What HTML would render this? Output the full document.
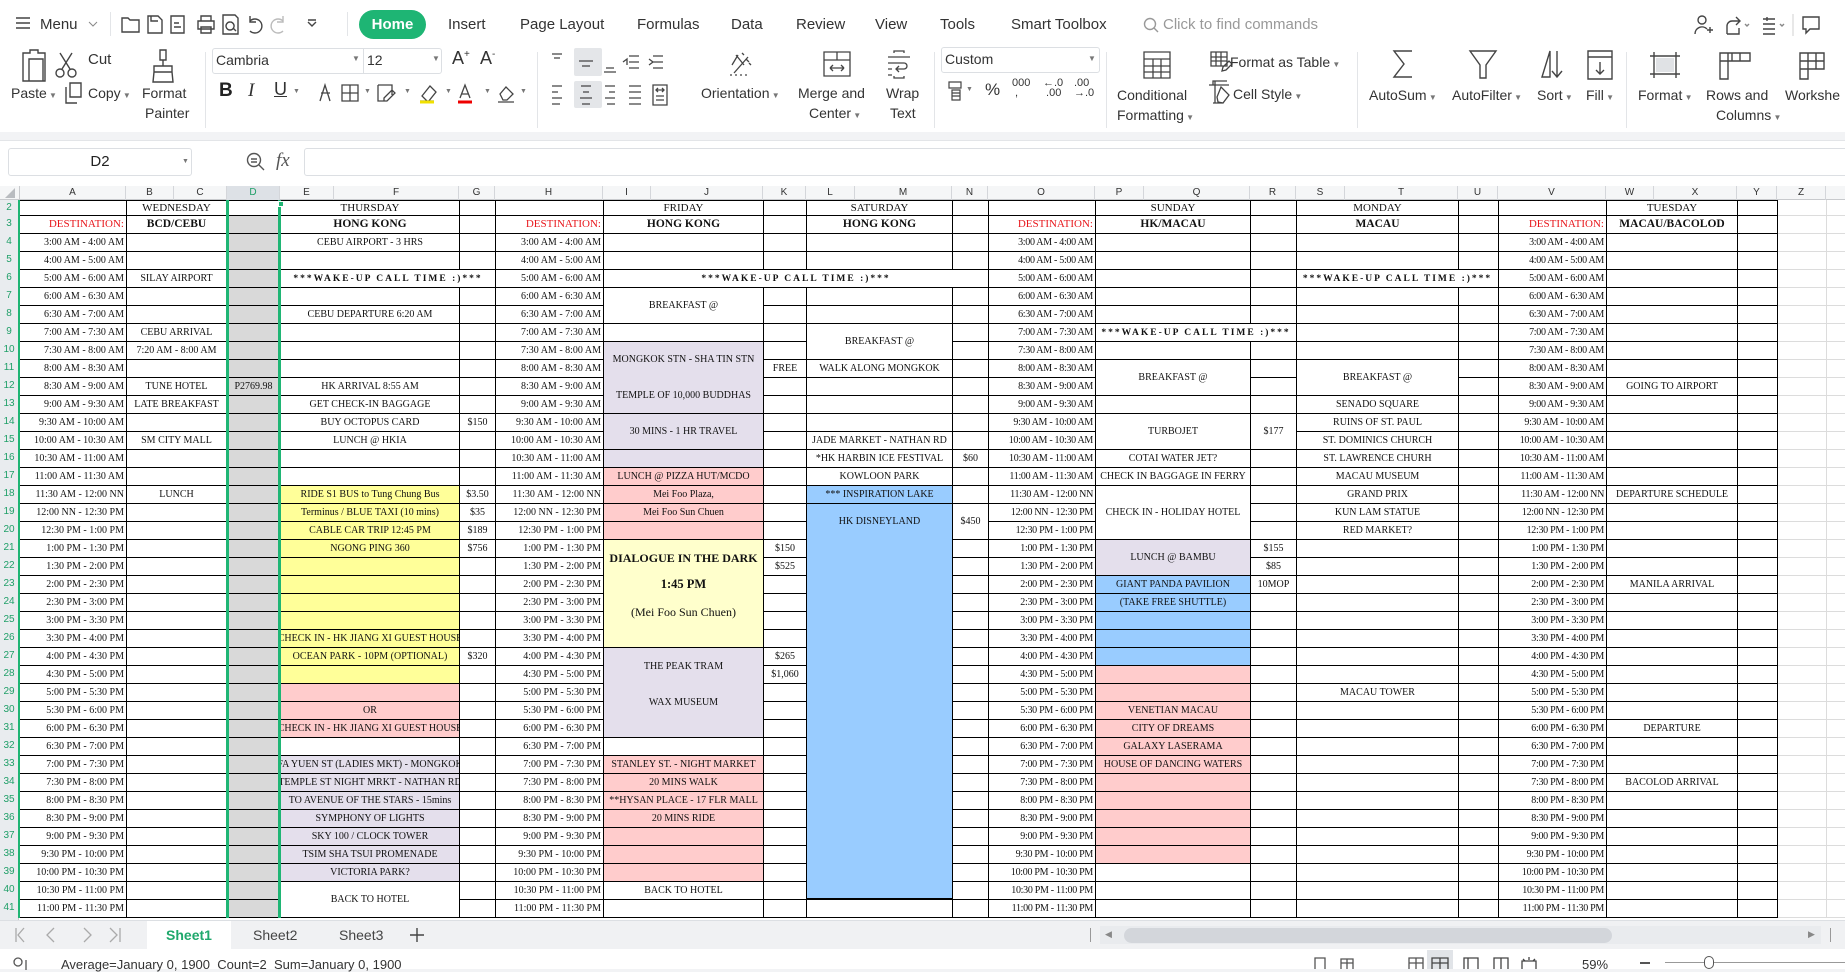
<!DOCTYPE html>
<html><head><meta charset="utf-8">
<style>
*{margin:0;padding:0;box-sizing:border-box}
body{width:1845px;height:969px;overflow:hidden;background:#f2f3f5;font-family:"Liberation Sans",sans-serif;color:#333;position:relative}
.a{position:absolute}
.tabs{left:0;top:0;width:1845px;height:46px;background:#fff}
.tab{position:absolute;top:16px;font-size:15px;color:#333}
.rib{left:0;top:46px;width:1845px;height:86px;background:#fff}
.lbl{position:absolute;font-size:14px;color:#333;white-space:nowrap}
.sep{position:absolute;width:1px;background:#e3e5e8}
.c{position:absolute;display:flex;align-items:center;justify-content:center;text-align:center;white-space:nowrap;overflow:hidden;font:10px "Liberation Serif",serif;color:#111}
.b{border:1px solid #000}
.w{background:#fff}.lav{background:#e4dfec}.pk{background:#ffcccc}.yl{background:#ffff99}.yl2{background:#ffffcc}.bl{background:#99ccff}
.wk{letter-spacing:2px;font-weight:bold;font-size:9.5px}
.tc{position:absolute;top:233px;font:10px "Liberation Serif",serif;color:#111}
.tc div{height:18px;line-height:19px;text-align:right;padding-right:2px;white-space:nowrap}
.hd{font-size:11px}
.hb{font-size:11.5px;font-weight:bold}
.red{color:#e8171c;justify-content:flex-end;padding-right:2px;font-size:11px}
.ch{position:absolute;top:186px;height:14px;font-size:10px;color:#333;text-align:center;line-height:14px;border-right:1px solid #d4d6da}
.rn div{height:18px;line-height:18px;text-align:center;font-size:10px;color:#1f9f68}
svg{position:absolute;overflow:visible}
</style></head><body>

<!-- top tab bar -->
<div class="a tabs">
  <svg style="left:15px;top:16px" width="16" height="14"><path d="M1 2h14M1 7h14M1 12h14" stroke="#444" stroke-width="1.5"/></svg>
  <div class="tab" style="left:40px">Menu</div>
  <svg style="left:88px;top:21px" width="10" height="6"><path d="M1 1l4 4 4-4" stroke="#888" fill="none"/></svg>
  <div class="sep" style="left:110px;top:12px;height:24px"></div>
  <svg style="left:121px;top:13px" width="220" height="22" fill="none" stroke="#444" stroke-width="1.4">
    <path d="M1 5h6l2 2h9v12H1z"/>
    <path d="M27 3h10l4 4v13H27zM30 3v5h7"/>
    <path d="M50 3h13v17H50zM53 10h5M53 14h7"/>
    <path d="M77 8h16v8H77zM80 8V3h10v5M80 14h10v6H80z"/>
    <path d="M102 2h12l3 3v16h-15zM109 9a4 4 0 1 0 .1 0M112 15l3 3"/>
    <path d="M129 8a7 7 0 1 1 0 10M129 3v6h6"/>
    <path d="M162 8a7 7 0 1 0 0 10M162 3v6h-6" stroke="#bbb"/>
    <path d="M187 9l4 4 4-4M187 7h8"/>
  </svg>
  <div class="sep" style="left:347px;top:12px;height:24px"></div>
  <div class="a" style="left:359px;top:10px;width:67px;height:29px;border-radius:15px;background:#1eb574;color:#fff;font-weight:bold;font-size:15px;text-align:center;line-height:29px">Home</div>
  <div class="tab" style="left:448px">Insert</div>
  <div class="tab" style="left:520px">Page Layout</div>
  <div class="tab" style="left:637px">Formulas</div>
  <div class="tab" style="left:731px">Data</div>
  <div class="tab" style="left:796px">Review</div>
  <div class="tab" style="left:875px">View</div>
  <div class="tab" style="left:940px">Tools</div>
  <div class="tab" style="left:1011px">Smart Toolbox</div>
  <svg style="left:1143px;top:17px" width="16" height="16" fill="none" stroke="#999" stroke-width="1.4"><circle cx="7" cy="7" r="5.5"/><path d="M11 11l4 4"/></svg>
  <div class="tab" style="left:1163px;color:#999">Click to find commands</div>
  <svg style="left:1693px;top:14px" width="150" height="22" fill="none" stroke="#444" stroke-width="1.4">
    <circle cx="9" cy="6" r="4"/><path d="M2 20a7 7 0 0 1 12-5M14 16h6M17 13v6"/>
    <path d="M34 20V12a5 5 0 0 1 5-5h8M43 3l4 4-4 4M34 20h12v-6"/><path d="M52 10l2 2 2-2" stroke="#888"/>
    <path d="M70 5h12M70 10h12M70 15h12M70 20h12M74 3v4" /><path d="M87 10l2 2 2-2" stroke="#888"/>
    <path d="M100 0v22" stroke="#ddd"/>
    <path d="M110 3h16v12h-9l-4 4v-4h-3z"/>
  </svg>
</div>

<!-- ribbon -->
<div class="a rib">
  <svg style="left:20px;top:3px" width="200" height="34" fill="none" stroke="#444" stroke-width="1.4">
    <path d="M3 4h7V1h8v3h7v28H3z M9 10h14v22H9z"/>
    <circle cx="40" cy="24" r="4"/><circle cx="52" cy="24" r="4"/><path d="M42 20L52 4M50 20L40 4"/>
    <path d="M140 1h6v10h-6zM143 11v6M134 17h18v6h-18zM134 23l-1 10h20l-1-10"/>
  </svg>
  <div class="lbl" style="left:88px;top:5px;font-size:15px">Cut</div>
  <div class="lbl" style="left:11px;top:39px">Paste<span style="font-size:8px;color:#777"> ▼</span></div>
  <svg style="left:64px;top:36px" width="20" height="22" fill="none" stroke="#444" stroke-width="1.4"><path d="M6 1h11v14H6zM2 5v16h11"/></svg>
  <div class="lbl" style="left:88px;top:39px">Copy<span style="font-size:8px;color:#777"> ▼</span></div>
  <div class="lbl" style="left:142px;top:39px">Format</div>
  <div class="lbl" style="left:145px;top:59px">Painter</div>
  <div class="sep" style="left:205px;top:6px;height:76px"></div>
  <div class="a" style="left:212px;top:2px;width:230px;height:26px;border:1px solid #dcdfe3;border-radius:3px;background:#fff"></div>
  <div class="lbl" style="left:216px;top:6px">Cambria</div>
  <div class="lbl" style="left:352px;top:8px;font-size:8px;color:#777">▼</div>
  <div class="a" style="left:363px;top:3px;width:1px;height:24px;background:#dcdfe3"></div>
  <div class="lbl" style="left:367px;top:6px">12</div>
  <div class="lbl" style="left:432px;top:8px;font-size:8px;color:#777">▼</div>
  <div class="lbl" style="left:452px;top:2px;font-size:18px">A<sup style="font-size:10px">+</sup></div>
  <div class="lbl" style="left:480px;top:2px;font-size:18px">A<sup style="font-size:10px">-</sup></div>
  <div class="lbl" style="left:219px;top:34px;font-size:19px;font-weight:bold;color:#222">B</div>
  <div class="lbl" style="left:248px;top:34px;font-size:19px;font-style:italic;font-family:'Liberation Serif'">I</div>
  <div class="lbl" style="left:274px;top:33px;font-size:18px;text-decoration:underline">U</div>
  <svg style="left:300px;top:36px" width="220" height="22" fill="none" stroke="#444" stroke-width="1.3">
    <path d="M20 19L25 3l5 16M21 11h9"/>
    <path d="M42 3h16v16H42zM50 3v16M42 11h16"/>
    <path d="M78 3h14v10M78 3v16h8M84 16l8-8 3 3-8 8h-3z"/>
    <path d="M122 14l8-10 6 6-8 10zM120 19h14" /><path d="M120 20h14" stroke="#f0e000" stroke-width="3"/>
    <path d="M160 16l5-13 5 13M162 12h6"/><path d="M158 20h14" stroke="#e00" stroke-width="3"/>
    <path d="M200 12l6-7 7 7-6 6h-4zM198 20h16"/>
  </svg>
  <div class="lbl" style="left:293px;top:42px;font-size:7px;color:#777">▼</div>
  <div class="lbl" style="left:364px;top:42px;font-size:7px;color:#777">▼</div>
  <div class="lbl" style="left:404px;top:42px;font-size:7px;color:#777">▼</div>
  <div class="lbl" style="left:445px;top:42px;font-size:7px;color:#777">▼</div>
  <div class="lbl" style="left:484px;top:42px;font-size:7px;color:#777">▼</div>
  <div class="lbl" style="left:520px;top:42px;font-size:7px;color:#777">▼</div>
  <div class="sep" style="left:537px;top:6px;height:76px"></div>
  <div class="a" style="left:574px;top:35px;width:28px;height:27px;background:#e4e6e9;border-radius:2px"></div>
  <div class="a" style="left:574px;top:2px;width:28px;height:28px;background:#e4e6e9;border-radius:2px"></div>
  <svg style="left:549px;top:6px" width="140" height="56" fill="none" stroke="#444" stroke-width="1.3">
    <path d="M3 2h10M5 6h6 M30 9h14M33 14h8 M57 16h8M55 20h12 M80 4h10M80 10h10M80 16h10M74 10l4-3v6 M104 4h10M104 10h10M104 16h10M100 7l4 3-4 3"/>
    <path d="M3 34h10M3 40h6M3 46h10M3 52h8 M32 34h10M34 40h6M31 46h12M33 52h8 M56 34h10M60 40h6M56 46h10M58 52h8 M80 34h12M80 40h12M80 46h12M80 52h12 M104 33v20h14V33zM107 38h8M109 36l-2 2 2 2M113 36l2 2-2 2M107 44h8M107 48h8"/>
  </svg>
  <svg style="left:728px;top:3px" width="200" height="34" fill="none" stroke="#444" stroke-width="1.3">
    <path d="M8 6l8 10M4 16l6-10 M14 4l2 2M18 10l3 3M21 14l2 2M6 24l14-16M2 26h2M7 26h2M12 26h2M17 26h2"/>
    <path d="M96 3h26v24H96zM96 11h26M109 3v8M102 19h14M102 19l3-3M102 19l3 3M116 19l-3-3M116 19l-3 3"/>
    <path d="M166 4v-2h10v2M166 27v2h10v-2M160 8h22M160 14h16a3 3 0 0 1 0 6h-8M171 17l-3 3 3 3M160 20h4M160 26h4"/>
  </svg>
  <div class="lbl" style="left:701px;top:39px">Orientation<span style="font-size:8px;color:#777"> ▼</span></div>
  <div class="lbl" style="left:798px;top:39px">Merge and</div>
  <div class="lbl" style="left:809px;top:59px">Center<span style="font-size:8px;color:#777"> ▼</span></div>
  <div class="lbl" style="left:886px;top:39px">Wrap</div>
  <div class="lbl" style="left:890px;top:59px">Text</div>
  <div class="sep" style="left:934px;top:6px;height:76px"></div>
  <div class="a" style="left:941px;top:1px;width:159px;height:26px;border:1px solid #dcdfe3;border-radius:3px;background:#fff"></div>
  <div class="lbl" style="left:945px;top:5px">Custom</div>
  <div class="lbl" style="left:1088px;top:8px;font-size:8px;color:#777">▼</div>
  <svg style="left:947px;top:34px" width="150" height="24" fill="none" stroke="#444" stroke-width="1.2">
    <path d="M2 2h12v6H2zM5 10h8v10H5zM5 13h8M5 16h8"/>
  </svg>
  <div class="lbl" style="left:966px;top:40px;font-size:7px;color:#777">▼</div>
  <div class="lbl" style="left:985px;top:34px;font-size:17px">%</div>
  <div class="lbl" style="left:1012px;top:32px;font-size:11px;line-height:10px">000<br>&nbsp;,</div>
  <div class="lbl" style="left:1043px;top:32px;font-size:11px;line-height:10px">←.0<br>&nbsp;.00</div>
  <div class="lbl" style="left:1074px;top:32px;font-size:11px;line-height:10px">.00<br>→.0</div>
  <div class="sep" style="left:1106px;top:6px;height:76px"></div>
  <svg style="left:1143px;top:5px" width="220" height="56" fill="none" stroke="#444" stroke-width="1.3">
    <path d="M1 1h26v26H1zM1 8h26M1 15h26M1 21h26M10 8v19M18 8v19"/>
    <path d="M68 1h16v14H68zM68 6h16M68 10h16M73 1v14M78 1v14M80 16l6-6 3 3-6 6-4 1z"/>
    <path d="M70 34v-4h14M72 30v22M70 52h10M66 34h20M78 36l8 8-6 8-5-1-1-5z"/>
  </svg>
  <div class="lbl" style="left:1230px;top:8px">Format as Table<span style="font-size:8px;color:#777"> ▼</span></div>
  <div class="lbl" style="left:1233px;top:40px">Cell Style<span style="font-size:8px;color:#777"> ▼</span></div>
  <div class="lbl" style="left:1117px;top:41px">Conditional</div>
  <div class="lbl" style="left:1117px;top:61px">Formatting<span style="font-size:8px;color:#777"> ▼</span></div>
  <div class="sep" style="left:1357px;top:6px;height:76px"></div>
  <svg style="left:1392px;top:4px" width="230" height="32" fill="none" stroke="#444" stroke-width="1.4">
    <path d="M20 1H2l10 13L2 27h18"/>
    <path d="M78 1h26l-10 14v13h-6V15z"/>
    <path d="M150 27l8-26v26zM150 27h8M165 1v26M160 21l5 6 5-6"/>
    <path d="M196 1h24v28h-24zM196 7h24M208 12v12M204 20l4 4 4-4"/>
  </svg>
  <div class="lbl" style="left:1369px;top:41px">AutoSum<span style="font-size:8px;color:#777"> ▼</span></div>
  <div class="lbl" style="left:1452px;top:41px">AutoFilter<span style="font-size:8px;color:#777"> ▼</span></div>
  <div class="lbl" style="left:1537px;top:41px">Sort<span style="font-size:8px;color:#777"> ▼</span></div>
  <div class="lbl" style="left:1586px;top:41px">Fill<span style="font-size:8px;color:#777"> ▼</span></div>
  <div class="sep" style="left:1626px;top:6px;height:76px"></div>
  <svg style="left:1650px;top:6px" width="200" height="30" fill="none" stroke="#444" stroke-width="1.4">
    <path d="M4 0v26M26 0v26M0 4h30M0 22h30"/><path d="M6 6h18v14H6z" fill="#e0e2e5" stroke="none"/>
    <path d="M70 1h30v8H70zM70 1v26h8V1M82 1v8M90 1v8"/>
    <path d="M150 1h24v16h-24zM150 9h24M158 1v26h-8V17M166 1v16"/>
  </svg>
  <div class="lbl" style="left:1638px;top:41px">Format<span style="font-size:8px;color:#777"> ▼</span></div>
  <div class="lbl" style="left:1706px;top:41px">Rows and</div>
  <div class="lbl" style="left:1716px;top:61px">Columns<span style="font-size:8px;color:#777"> ▼</span></div>
  <div class="lbl" style="left:1785px;top:41px">Workshe</div>
</div>

<!-- formula bar -->
<div class="a" style="left:0;top:140px;width:1845px;height:46px;background:#fff;border-top:1px solid #e3e5e8"></div>
<div class="a" style="left:8px;top:148px;width:184px;height:28px;border:1px solid #dcdfe3;border-radius:3px;background:#fff;font-size:15px;text-align:center;line-height:26px;color:#222">D2</div>
<div class="a" style="left:182px;top:158px;font-size:7px;color:#777">▼</div>
<svg style="left:246px;top:152px" width="20" height="20" fill="none" stroke="#555" stroke-width="1.4"><circle cx="8" cy="8" r="6.5"/><path d="M5 7h6M5 10h6M13 13l5 5"/></svg>
<div class="a" style="left:276px;top:150px;font:italic 19px 'Liberation Serif',serif;color:#555">fx</div>
<div class="a" style="left:304px;top:148px;width:1545px;height:28px;border:1px solid #dcdfe3;border-radius:3px;background:#fff"></div>

<!-- column header -->
<div class="a" style="left:0;top:186px;width:1845px;height:14px;background:#f5f6f7;border-bottom:1px solid #c8cacd"></div>
<div class="a" style="left:227px;top:186px;width:53px;height:14px;background:#dde1e6"></div>
<svg style="left:4px;top:188px" width="12" height="11"><path d="M11 0v10H1z" fill="#b9bcc0"/></svg>
<div class="ch" style="left:0;width:20px;border-right:1px solid #c8cacd"></div>
<div class="ch" style="left:20px;width:106px">A</div>
<div class="ch" style="left:126px;width:48px">B</div>
<div class="ch" style="left:174px;width:53px">C</div>
<div class="ch" style="left:227px;width:53px;color:#1f9f68">D</div>
<div class="ch" style="left:280px;width:54px">E</div>
<div class="ch" style="left:334px;width:125px">F</div>
<div class="ch" style="left:459px;width:36px">G</div>
<div class="ch" style="left:495px;width:108px">H</div>
<div class="ch" style="left:603px;width:48px">I</div>
<div class="ch" style="left:651px;width:112px">J</div>
<div class="ch" style="left:763px;width:43px">K</div>
<div class="ch" style="left:806px;width:49px">L</div>
<div class="ch" style="left:855px;width:97px">M</div>
<div class="ch" style="left:952px;width:36px">N</div>
<div class="ch" style="left:988px;width:107px">O</div>
<div class="ch" style="left:1095px;width:49px">P</div>
<div class="ch" style="left:1144px;width:106px">Q</div>
<div class="ch" style="left:1250px;width:46px">R</div>
<div class="ch" style="left:1296px;width:49px">S</div>
<div class="ch" style="left:1345px;width:113px">T</div>
<div class="ch" style="left:1458px;width:40px">U</div>
<div class="ch" style="left:1498px;width:108px">V</div>
<div class="ch" style="left:1606px;width:48px">W</div>
<div class="ch" style="left:1654px;width:83px">X</div>
<div class="ch" style="left:1737px;width:40px">Y</div>
<div class="ch" style="left:1777px;width:49px">Z</div>
<div class="ch" style="left:1826px;width:19px;border:none"></div>

<!-- sheet area -->
<div class="a" style="left:0;top:200px;width:1845px;height:720px;background:#fff"></div>
<div class="a rn" style="left:0;top:200px;width:19px;height:720px;background:#e9ecef;border-right:1px solid #c8cacd">
<div style="height:15px;line-height:15px">2</div><div>3</div><div>4</div><div>5</div><div>6</div><div>7</div><div>8</div><div>9</div><div>10</div><div>11</div><div>12</div><div>13</div><div>14</div><div>15</div><div>16</div><div>17</div><div>18</div><div>19</div><div>20</div><div>21</div><div>22</div><div>23</div><div>24</div><div>25</div><div>26</div><div>27</div><div>28</div><div>29</div><div>30</div><div>31</div><div>32</div><div>33</div><div>34</div><div>35</div><div>36</div><div>37</div><div>38</div><div>39</div><div>40</div><div>41</div>
</div>
<div class="a" style="left:18px;top:200px;width:2px;height:718px;background:#1fb574"></div>

<div class="a" style="left:1778px;top:233px;width:67px;height:686px;background:repeating-linear-gradient(#dcdcdc 0 1px,transparent 1px 18px)"></div>
<div class="a" style="left:1778px;top:215px;width:67px;height:1px;background:#dcdcdc"></div>
<div class="a" style="left:1826px;top:200px;width:1px;height:718px;background:#dcdcdc"></div>

<div class="a" style="left:227px;top:215px;width:53px;height:703px;background:#d9d9d9"></div>

<div class="a" style="left:20px;top:233px;width:1758px;height:685px;background:repeating-linear-gradient(#000 0 1px,transparent 1px 18px)"></div>
<div class="a" style="left:20px;top:200px;width:1758px;height:1px;background:#000"></div>
<div class="a" style="left:20px;top:215px;width:1758px;height:1px;background:#000"></div>
<div class="a" style="left:20px;top:917px;width:1758px;height:1px;background:#000"></div>
<div class="a" style="left:126px;top:200px;width:1px;height:718px;background:#000"></div>
<div class="a" style="left:226px;top:200px;width:1px;height:718px;background:#000"></div>
<div class="a" style="left:280px;top:200px;width:1px;height:718px;background:#000"></div>
<div class="a" style="left:459px;top:200px;width:1px;height:718px;background:#000"></div>
<div class="a" style="left:495px;top:200px;width:1px;height:718px;background:#000"></div>
<div class="a" style="left:603px;top:200px;width:1px;height:718px;background:#000"></div>
<div class="a" style="left:763px;top:200px;width:1px;height:718px;background:#000"></div>
<div class="a" style="left:806px;top:200px;width:1px;height:718px;background:#000"></div>
<div class="a" style="left:952px;top:200px;width:1px;height:718px;background:#000"></div>
<div class="a" style="left:988px;top:200px;width:1px;height:718px;background:#000"></div>
<div class="a" style="left:1095px;top:200px;width:1px;height:718px;background:#000"></div>
<div class="a" style="left:1250px;top:200px;width:1px;height:718px;background:#000"></div>
<div class="a" style="left:1296px;top:200px;width:1px;height:718px;background:#000"></div>
<div class="a" style="left:1458px;top:200px;width:1px;height:718px;background:#000"></div>
<div class="a" style="left:1498px;top:200px;width:1px;height:718px;background:#000"></div>
<div class="a" style="left:1606px;top:200px;width:1px;height:718px;background:#000"></div>
<div class="a" style="left:1737px;top:200px;width:1px;height:718px;background:#000"></div>
<div class="a" style="left:1777px;top:200px;width:1px;height:718px;background:#000"></div>

<div class="c hd" style="left:126px;top:200px;width:101px;height:16px">WEDNESDAY</div>
<div class="c hd" style="left:280px;top:200px;width:180px;height:16px">THURSDAY</div>
<div class="c hd" style="left:603px;top:200px;width:161px;height:16px">FRIDAY</div>
<div class="c hd" style="left:806px;top:200px;width:147px;height:16px">SATURDAY</div>
<div class="c hd" style="left:1095px;top:200px;width:156px;height:16px">SUNDAY</div>
<div class="c hd" style="left:1296px;top:200px;width:163px;height:16px">MONDAY</div>
<div class="c hd" style="left:1606px;top:200px;width:132px;height:16px">TUESDAY</div>
<div class="c hb" style="left:126px;top:215px;width:101px;height:18px">BCD/CEBU</div>
<div class="c hb" style="left:280px;top:215px;width:180px;height:18px">HONG KONG</div>
<div class="c hb" style="left:603px;top:215px;width:161px;height:18px">HONG KONG</div>
<div class="c hb" style="left:806px;top:215px;width:147px;height:18px">HONG KONG</div>
<div class="c hb" style="left:1095px;top:215px;width:156px;height:18px">HK/MACAU</div>
<div class="c hb" style="left:1296px;top:215px;width:163px;height:18px">MACAU</div>
<div class="c hb" style="left:1606px;top:215px;width:132px;height:18px">MACAU/BACOLOD</div>
<div class="c red" style="left:20px;top:215px;width:106px;height:18px">DESTINATION:</div>
<div class="c red" style="left:495px;top:215px;width:108px;height:18px">DESTINATION:</div>
<div class="c red" style="left:988px;top:215px;width:107px;height:18px">DESTINATION:</div>
<div class="c red" style="left:1498px;top:215px;width:108px;height:18px">DESTINATION:</div>

<div class="tc" style="left:21px;width:105px"><div>3:00 AM - 4:00 AM</div><div>4:00 AM - 5:00 AM</div><div>5:00 AM - 6:00 AM</div><div>6:00 AM - 6:30 AM</div><div>6:30 AM - 7:00 AM</div><div>7:00 AM - 7:30 AM</div><div>7:30 AM - 8:00 AM</div><div>8:00 AM - 8:30 AM</div><div>8:30 AM - 9:00 AM</div><div>9:00 AM - 9:30 AM</div><div>9:30 AM - 10:00 AM</div><div>10:00 AM - 10:30 AM</div><div>10:30 AM - 11:00 AM</div><div>11:00 AM - 11:30 AM</div><div>11:30 AM - 12:00 NN</div><div>12:00 NN - 12:30 PM</div><div>12:30 PM - 1:00 PM</div><div>1:00 PM - 1:30 PM</div><div>1:30 PM - 2:00 PM</div><div>2:00 PM - 2:30 PM</div><div>2:30 PM - 3:00 PM</div><div>3:00 PM - 3:30 PM</div><div>3:30 PM - 4:00 PM</div><div>4:00 PM - 4:30 PM</div><div>4:30 PM - 5:00 PM</div><div>5:00 PM - 5:30 PM</div><div>5:30 PM - 6:00 PM</div><div>6:00 PM - 6:30 PM</div><div>6:30 PM - 7:00 PM</div><div>7:00 PM - 7:30 PM</div><div>7:30 PM - 8:00 PM</div><div>8:00 PM - 8:30 PM</div><div>8:30 PM - 9:00 PM</div><div>9:00 PM - 9:30 PM</div><div>9:30 PM - 10:00 PM</div><div>10:00 PM - 10:30 PM</div><div>10:30 PM - 11:00 PM</div><div>11:00 PM - 11:30 PM</div></div>
<div class="tc" style="left:496px;width:107px"><div>3:00 AM - 4:00 AM</div><div>4:00 AM - 5:00 AM</div><div>5:00 AM - 6:00 AM</div><div>6:00 AM - 6:30 AM</div><div>6:30 AM - 7:00 AM</div><div>7:00 AM - 7:30 AM</div><div>7:30 AM - 8:00 AM</div><div>8:00 AM - 8:30 AM</div><div>8:30 AM - 9:00 AM</div><div>9:00 AM - 9:30 AM</div><div>9:30 AM - 10:00 AM</div><div>10:00 AM - 10:30 AM</div><div>10:30 AM - 11:00 AM</div><div>11:00 AM - 11:30 AM</div><div>11:30 AM - 12:00 NN</div><div>12:00 NN - 12:30 PM</div><div>12:30 PM - 1:00 PM</div><div>1:00 PM - 1:30 PM</div><div>1:30 PM - 2:00 PM</div><div>2:00 PM - 2:30 PM</div><div>2:30 PM - 3:00 PM</div><div>3:00 PM - 3:30 PM</div><div>3:30 PM - 4:00 PM</div><div>4:00 PM - 4:30 PM</div><div>4:30 PM - 5:00 PM</div><div>5:00 PM - 5:30 PM</div><div>5:30 PM - 6:00 PM</div><div>6:00 PM - 6:30 PM</div><div>6:30 PM - 7:00 PM</div><div>7:00 PM - 7:30 PM</div><div>7:30 PM - 8:00 PM</div><div>8:00 PM - 8:30 PM</div><div>8:30 PM - 9:00 PM</div><div>9:00 PM - 9:30 PM</div><div>9:30 PM - 10:00 PM</div><div>10:00 PM - 10:30 PM</div><div>10:30 PM - 11:00 PM</div><div>11:00 PM - 11:30 PM</div></div>
<div class="tc" style="left:989px;width:106px;letter-spacing:-0.3px"><div>3:00 AM - 4:00 AM</div><div>4:00 AM - 5:00 AM</div><div>5:00 AM - 6:00 AM</div><div>6:00 AM - 6:30 AM</div><div>6:30 AM - 7:00 AM</div><div>7:00 AM - 7:30 AM</div><div>7:30 AM - 8:00 AM</div><div>8:00 AM - 8:30 AM</div><div>8:30 AM - 9:00 AM</div><div>9:00 AM - 9:30 AM</div><div>9:30 AM - 10:00 AM</div><div>10:00 AM - 10:30 AM</div><div>10:30 AM - 11:00 AM</div><div>11:00 AM - 11:30 AM</div><div>11:30 AM - 12:00 NN</div><div>12:00 NN - 12:30 PM</div><div>12:30 PM - 1:00 PM</div><div>1:00 PM - 1:30 PM</div><div>1:30 PM - 2:00 PM</div><div>2:00 PM - 2:30 PM</div><div>2:30 PM - 3:00 PM</div><div>3:00 PM - 3:30 PM</div><div>3:30 PM - 4:00 PM</div><div>4:00 PM - 4:30 PM</div><div>4:30 PM - 5:00 PM</div><div>5:00 PM - 5:30 PM</div><div>5:30 PM - 6:00 PM</div><div>6:00 PM - 6:30 PM</div><div>6:30 PM - 7:00 PM</div><div>7:00 PM - 7:30 PM</div><div>7:30 PM - 8:00 PM</div><div>8:00 PM - 8:30 PM</div><div>8:30 PM - 9:00 PM</div><div>9:00 PM - 9:30 PM</div><div>9:30 PM - 10:00 PM</div><div>10:00 PM - 10:30 PM</div><div>10:30 PM - 11:00 PM</div><div>11:00 PM - 11:30 PM</div></div>
<div class="tc" style="left:1499px;width:107px;letter-spacing:-0.3px"><div>3:00 AM - 4:00 AM</div><div>4:00 AM - 5:00 AM</div><div>5:00 AM - 6:00 AM</div><div>6:00 AM - 6:30 AM</div><div>6:30 AM - 7:00 AM</div><div>7:00 AM - 7:30 AM</div><div>7:30 AM - 8:00 AM</div><div>8:00 AM - 8:30 AM</div><div>8:30 AM - 9:00 AM</div><div>9:00 AM - 9:30 AM</div><div>9:30 AM - 10:00 AM</div><div>10:00 AM - 10:30 AM</div><div>10:30 AM - 11:00 AM</div><div>11:00 AM - 11:30 AM</div><div>11:30 AM - 12:00 NN</div><div>12:00 NN - 12:30 PM</div><div>12:30 PM - 1:00 PM</div><div>1:00 PM - 1:30 PM</div><div>1:30 PM - 2:00 PM</div><div>2:00 PM - 2:30 PM</div><div>2:30 PM - 3:00 PM</div><div>3:00 PM - 3:30 PM</div><div>3:30 PM - 4:00 PM</div><div>4:00 PM - 4:30 PM</div><div>4:30 PM - 5:00 PM</div><div>5:00 PM - 5:30 PM</div><div>5:30 PM - 6:00 PM</div><div>6:00 PM - 6:30 PM</div><div>6:30 PM - 7:00 PM</div><div>7:00 PM - 7:30 PM</div><div>7:30 PM - 8:00 PM</div><div>8:00 PM - 8:30 PM</div><div>8:30 PM - 9:00 PM</div><div>9:00 PM - 9:30 PM</div><div>9:30 PM - 10:00 PM</div><div>10:00 PM - 10:30 PM</div><div>10:30 PM - 11:00 PM</div><div>11:00 PM - 11:30 PM</div></div>

<div class="c" style="left:126px;top:269px;width:101px;height:19px">SILAY AIRPORT</div>
<div class="c" style="left:126px;top:323px;width:101px;height:19px">CEBU ARRIVAL</div>
<div class="c" style="left:126px;top:341px;width:101px;height:19px">7:20 AM - 8:00 AM</div>
<div class="c" style="left:126px;top:377px;width:101px;height:19px">TUNE HOTEL</div>
<div class="c" style="left:126px;top:395px;width:101px;height:19px">LATE BREAKFAST</div>
<div class="c" style="left:126px;top:431px;width:101px;height:19px">SM CITY MALL</div>
<div class="c" style="left:126px;top:485px;width:101px;height:19px">LUNCH</div>
<div class="c" style="left:227px;top:377px;width:53px;height:19px">P2769.98</div>

<div class="c" style="left:280px;top:233px;width:180px;height:19px">CEBU AIRPORT - 3 HRS</div>
<div class="c b w wk" style="left:280px;top:269px;width:216px;height:19px">***WAKE-UP CALL TIME :)***</div>
<div class="c" style="left:280px;top:305px;width:180px;height:19px">CEBU DEPARTURE 6:20 AM</div>
<div class="c" style="left:280px;top:377px;width:180px;height:19px">HK ARRIVAL 8:55 AM</div>
<div class="c" style="left:280px;top:395px;width:180px;height:19px">GET CHECK-IN BAGGAGE</div>
<div class="c" style="left:280px;top:413px;width:180px;height:19px">BUY OCTOPUS CARD</div>
<div class="c" style="left:280px;top:431px;width:180px;height:19px">LUNCH @ HKIA</div>
<div class="c b yl" style="left:280px;top:485px;width:180px;height:19px">RIDE S1 BUS to Tung Chung Bus</div>
<div class="c b yl" style="left:280px;top:503px;width:180px;height:19px">Terminus / BLUE TAXI (10 mins)</div>
<div class="c b yl" style="left:280px;top:521px;width:180px;height:19px">CABLE CAR TRIP 12:45 PM</div>
<div class="c b yl" style="left:280px;top:539px;width:180px;height:19px">NGONG PING 360</div>
<div class="c b yl" style="left:280px;top:557px;width:180px;height:19px"></div>
<div class="c b yl" style="left:280px;top:575px;width:180px;height:19px"></div>
<div class="c b yl" style="left:280px;top:593px;width:180px;height:19px"></div>
<div class="c b yl" style="left:280px;top:611px;width:180px;height:19px"></div>
<div class="c b yl" style="left:280px;top:629px;width:180px;height:19px">CHECK IN - HK JIANG XI GUEST HOUSE</div>
<div class="c b yl" style="left:280px;top:647px;width:180px;height:19px">OCEAN PARK - 10PM (OPTIONAL)</div>
<div class="c b yl" style="left:280px;top:665px;width:180px;height:19px"></div>
<div class="c b pk" style="left:280px;top:683px;width:180px;height:19px"></div>
<div class="c b pk" style="left:280px;top:701px;width:180px;height:19px">OR</div>
<div class="c b pk" style="left:280px;top:719px;width:180px;height:19px">CHECK IN - HK JIANG XI GUEST HOUSE</div>
<div class="c b lav" style="left:280px;top:755px;width:180px;height:19px">FA YUEN ST (LADIES MKT) - MONGKOK</div>
<div class="c b lav" style="left:280px;top:773px;width:180px;height:19px">TEMPLE ST NIGHT MRKT - NATHAN RD</div>
<div class="c b lav" style="left:280px;top:791px;width:180px;height:19px">TO AVENUE OF THE STARS - 15mins</div>
<div class="c b lav" style="left:280px;top:809px;width:180px;height:19px">SYMPHONY OF LIGHTS</div>
<div class="c b lav" style="left:280px;top:827px;width:180px;height:19px">SKY 100 / CLOCK TOWER</div>
<div class="c b lav" style="left:280px;top:845px;width:180px;height:19px">TSIM SHA TSUI PROMENADE</div>
<div class="c b lav" style="left:280px;top:863px;width:180px;height:19px">VICTORIA PARK?</div>
<div class="c b w" style="left:280px;top:881px;width:180px;height:37px">BACK TO HOTEL</div>
<div class="c" style="left:460px;top:413px;width:35px;height:19px">$150</div>
<div class="c" style="left:460px;top:485px;width:35px;height:19px">$3.50</div>
<div class="c" style="left:460px;top:503px;width:35px;height:19px">$35</div>
<div class="c" style="left:460px;top:521px;width:35px;height:19px">$189</div>
<div class="c" style="left:460px;top:539px;width:35px;height:19px">$756</div>
<div class="c" style="left:460px;top:647px;width:35px;height:19px">$320</div>

<div class="c b w wk" style="left:603px;top:269px;width:386px;height:19px">***WAKE-UP CALL TIME :)***</div>
<div class="c b w" style="left:603px;top:287px;width:161px;height:37px">BREAKFAST @</div>
<div class="c b lav" style="left:603px;top:341px;width:161px;height:73px"></div>
<div class="c" style="left:603px;top:350px;width:161px;height:19px">MONGKOK STN - SHA TIN STN</div>
<div class="c" style="left:603px;top:386px;width:161px;height:19px">TEMPLE OF 10,000 BUDDHAS</div>
<div class="c b lav" style="left:603px;top:413px;width:161px;height:37px">30 MINS - 1 HR TRAVEL</div>
<div class="c b lav" style="left:603px;top:449px;width:161px;height:19px"></div>
<div class="c b pk" style="left:603px;top:467px;width:161px;height:19px">LUNCH @ PIZZA HUT/MCDO</div>
<div class="c b pk" style="left:603px;top:485px;width:161px;height:19px">Mei Foo Plaza,</div>
<div class="c b pk" style="left:603px;top:503px;width:161px;height:19px">Mei Foo Sun Chuen</div>
<div class="c b pk" style="left:603px;top:521px;width:161px;height:19px"></div>
<div class="c b yl2" style="left:603px;top:539px;width:161px;height:109px"></div>
<div class="c" style="left:603px;top:548px;width:161px;height:20px;font-size:12px;font-weight:bold">DIALOGUE IN THE DARK</div>
<div class="c" style="left:603px;top:574px;width:161px;height:20px;font-size:12.5px;font-weight:bold">1:45 PM</div>
<div class="c" style="left:603px;top:602px;width:161px;height:20px;font-size:12px">(Mei Foo Sun Chuen)</div>
<div class="c b lav" style="left:603px;top:647px;width:161px;height:91px"></div>
<div class="c" style="left:603px;top:657px;width:161px;height:19px">THE PEAK TRAM</div>
<div class="c" style="left:603px;top:693px;width:161px;height:19px">WAX MUSEUM</div>
<div class="c b pk" style="left:603px;top:755px;width:161px;height:19px">STANLEY ST. - NIGHT MARKET</div>
<div class="c b pk" style="left:603px;top:773px;width:161px;height:19px">20 MINS WALK</div>
<div class="c b pk" style="left:603px;top:791px;width:161px;height:19px">**HYSAN PLACE - 17 FLR MALL</div>
<div class="c b pk" style="left:603px;top:809px;width:161px;height:19px">20 MINS RIDE</div>
<div class="c b pk" style="left:603px;top:827px;width:161px;height:19px"></div>
<div class="c b pk" style="left:603px;top:845px;width:161px;height:19px"></div>
<div class="c b pk" style="left:603px;top:863px;width:161px;height:19px"></div>
<div class="c" style="left:603px;top:881px;width:161px;height:19px">BACK TO HOTEL</div>
<div class="c" style="left:764px;top:359px;width:42px;height:19px">FREE</div>
<div class="c" style="left:764px;top:539px;width:42px;height:19px">$150</div>
<div class="c" style="left:764px;top:557px;width:42px;height:19px">$525</div>
<div class="c" style="left:764px;top:647px;width:42px;height:19px">$265</div>
<div class="c" style="left:764px;top:665px;width:42px;height:19px">$1,060</div>
<div class="c b w" style="left:806px;top:323px;width:147px;height:37px">BREAKFAST @</div>
<div class="c" style="left:806px;top:359px;width:147px;height:19px">WALK ALONG MONGKOK</div>
<div class="c" style="left:806px;top:431px;width:147px;height:19px">JADE MARKET - NATHAN RD</div>
<div class="c" style="left:806px;top:449px;width:147px;height:19px">*HK HARBIN ICE FESTIVAL</div>
<div class="c" style="left:806px;top:467px;width:147px;height:19px">KOWLOON PARK</div>
<div class="c b bl" style="left:806px;top:485px;width:147px;height:19px">*** INSPIRATION LAKE</div>
<div class="c b bl" style="left:806px;top:503px;width:147px;height:396px"></div>
<div class="c" style="left:806px;top:512px;width:147px;height:19px">HK DISNEYLAND</div>
<div class="c" style="left:953px;top:449px;width:35px;height:19px">$60</div>
<div class="c b w" style="left:952px;top:503px;width:37px;height:37px">$450</div>

<div class="c b w wk" style="left:1095px;top:323px;width:202px;height:19px">***WAKE-UP CALL TIME :)***</div>
<div class="c b w" style="left:1095px;top:359px;width:156px;height:37px">BREAKFAST @</div>
<div class="c b w" style="left:1095px;top:413px;width:156px;height:37px">TURBOJET</div>
<div class="c b w" style="left:1250px;top:413px;width:47px;height:37px">$177</div>
<div class="c" style="left:1095px;top:449px;width:156px;height:19px">COTAI WATER JET?</div>
<div class="c" style="left:1095px;top:467px;width:156px;height:19px">CHECK IN BAGGAGE IN FERRY</div>
<div class="c b w" style="left:1095px;top:485px;width:156px;height:55px">CHECK IN - HOLIDAY HOTEL</div>
<div class="c b lav" style="left:1095px;top:539px;width:156px;height:37px">LUNCH @ BAMBU</div>
<div class="c" style="left:1251px;top:539px;width:45px;height:19px">$155</div>
<div class="c" style="left:1251px;top:557px;width:45px;height:19px">$85</div>
<div class="c b bl" style="left:1095px;top:575px;width:156px;height:19px">GIANT PANDA PAVILION</div>
<div class="c" style="left:1251px;top:575px;width:45px;height:19px">10MOP</div>
<div class="c b bl" style="left:1095px;top:593px;width:156px;height:19px">(TAKE FREE SHUTTLE)</div>
<div class="c b bl" style="left:1095px;top:611px;width:156px;height:19px"></div>
<div class="c b bl" style="left:1095px;top:629px;width:156px;height:19px"></div>
<div class="c b bl" style="left:1095px;top:647px;width:156px;height:19px"></div>
<div class="c b pk" style="left:1095px;top:665px;width:156px;height:19px"></div>
<div class="c b pk" style="left:1095px;top:683px;width:156px;height:19px"></div>
<div class="c b pk" style="left:1095px;top:701px;width:156px;height:19px">VENETIAN MACAU</div>
<div class="c b pk" style="left:1095px;top:719px;width:156px;height:19px">CITY OF DREAMS</div>
<div class="c b pk" style="left:1095px;top:737px;width:156px;height:19px">GALAXY LASERAMA</div>
<div class="c b pk" style="left:1095px;top:755px;width:156px;height:19px">HOUSE OF DANCING WATERS</div>
<div class="c b pk" style="left:1095px;top:773px;width:156px;height:19px"></div>
<div class="c b pk" style="left:1095px;top:791px;width:156px;height:19px"></div>
<div class="c b pk" style="left:1095px;top:809px;width:156px;height:19px"></div>
<div class="c b pk" style="left:1095px;top:827px;width:156px;height:19px"></div>
<div class="c b pk" style="left:1095px;top:845px;width:156px;height:19px"></div>

<div class="c b w wk" style="left:1296px;top:269px;width:203px;height:19px">***WAKE-UP CALL TIME :)***</div>
<div class="c b w" style="left:1296px;top:359px;width:163px;height:37px">BREAKFAST @</div>
<div class="c" style="left:1296px;top:395px;width:163px;height:19px">SENADO SQUARE</div>
<div class="c" style="left:1296px;top:413px;width:163px;height:19px">RUINS OF ST. PAUL</div>
<div class="c" style="left:1296px;top:431px;width:163px;height:19px">ST. DOMINICS CHURCH</div>
<div class="c" style="left:1296px;top:449px;width:163px;height:19px">ST. LAWRENCE CHURH</div>
<div class="c" style="left:1296px;top:467px;width:163px;height:19px">MACAU MUSEUM</div>
<div class="c" style="left:1296px;top:485px;width:163px;height:19px">GRAND PRIX</div>
<div class="c" style="left:1296px;top:503px;width:163px;height:19px">KUN LAM STATUE</div>
<div class="c" style="left:1296px;top:521px;width:163px;height:19px">RED MARKET?</div>
<div class="c" style="left:1296px;top:683px;width:163px;height:19px">MACAU TOWER</div>

<div class="c" style="left:1606px;top:377px;width:132px;height:19px">GOING TO AIRPORT</div>
<div class="c" style="left:1606px;top:485px;width:132px;height:19px">DEPARTURE SCHEDULE</div>
<div class="c" style="left:1606px;top:575px;width:132px;height:19px">MANILA ARRIVAL</div>
<div class="c" style="left:1606px;top:719px;width:132px;height:19px">DEPARTURE</div>
<div class="c" style="left:1606px;top:773px;width:132px;height:19px">BACOLOD ARRIVAL</div>

<div class="a" style="left:226px;top:200px;width:3px;height:718px;background:#1fb574"></div>
<div class="a" style="left:278px;top:200px;width:3px;height:718px;background:#1fb574"></div>
<div class="a" style="left:278px;top:201px;width:6px;height:6px;background:#1fb574;border:1px solid #fff"></div>

<div class="a" style="left:0;top:920px;width:1845px;height:29px;background:#f0f1f3;border-top:1px solid #dcdfe3"></div>
<svg style="left:14px;top:927px" width="110" height="16" fill="none" stroke="#aaa" stroke-width="1.3"><path d="M2 1v14M10 1L4 8l6 7 M40 1l-7 7 7 7 M70 1l7 7-7 7 M96 1l7 7-7 7M106 1v14"/></svg>
<div class="a" style="left:147px;top:921px;width:84px;height:28px;background:#fff;color:#1fa86c;font-weight:bold;font-size:14px;text-align:center;line-height:28px">Sheet1</div>
<div class="a" style="left:253px;top:927px;font-size:14px;color:#444">Sheet2</div>
<div class="a" style="left:339px;top:927px;font-size:14px;color:#444">Sheet3</div>
<svg style="left:409px;top:927px" width="16" height="16" stroke="#444" stroke-width="1.4"><path d="M8 1v14M1 8h14"/></svg>
<div class="a" style="left:1090px;top:928px;width:1px;height:14px;background:#999"></div>
<div class="a" style="left:1100px;top:926px;width:721px;height:18px;background:#e9ebee"></div>
<div class="a" style="left:1124px;top:928px;width:488px;height:15px;background:#d3d6db;border-radius:8px"></div>
<div class="a" style="left:1105px;top:929px;font-size:9px;color:#888">◀</div>
<div class="a" style="left:1808px;top:929px;font-size:9px;color:#888">▶</div>
<div class="a" style="left:1830px;top:928px;width:1px;height:14px;background:#999"></div>

<div class="a" style="left:0;top:949px;width:1845px;height:20px;background:#fff"></div>
<svg style="left:12px;top:956px" width="20" height="14" fill="none" stroke="#555" stroke-width="1.3"><circle cx="6" cy="6" r="4"/><path d="M14 4v10"/></svg>
<div class="a" style="left:61px;top:957px;font-size:13px;color:#333;white-space:nowrap">Average=January 0, 1900&nbsp;&nbsp;Count=2&nbsp;&nbsp;Sum=January 0, 1900</div>
<svg style="left:1313px;top:955px" width="270" height="14" fill="none" stroke="#555" stroke-width="1.3">
  <path d="M2 14V3h10v11 M28 14V4h12v10M28 8h12M34 4v10 M96 14V3h14v11M96 8h14M103 3v11"/>
</svg>
<div class="a" style="left:1427px;top:950px;width:26px;height:19px;background:#e1e4e8"></div>
<svg style="left:1430px;top:955px" width="150" height="14" fill="none" stroke="#444" stroke-width="1.3">
  <path d="M2 14V3h16v11M2 8h16M10 3v11 M34 14V3h14v11M38 3v11 M64 14V3h14v11M71 3v11 M92 14V6h14v8M99 2v3M93 4l2 2M105 4l-2 2"/>
</svg>
<div class="a" style="left:1582px;top:957px;font-size:13px;color:#333">59%</div>
<div class="a" style="left:1640px;top:962px;width:10px;height:2px;background:#555"></div>
<div class="a" style="left:1665px;top:962px;width:180px;height:1px;background:#999"></div>
<div class="a" style="left:1704px;top:956px;width:10px;height:13px;border:1.5px solid #555;border-radius:5px;background:#fff"></div>
</body></html>
